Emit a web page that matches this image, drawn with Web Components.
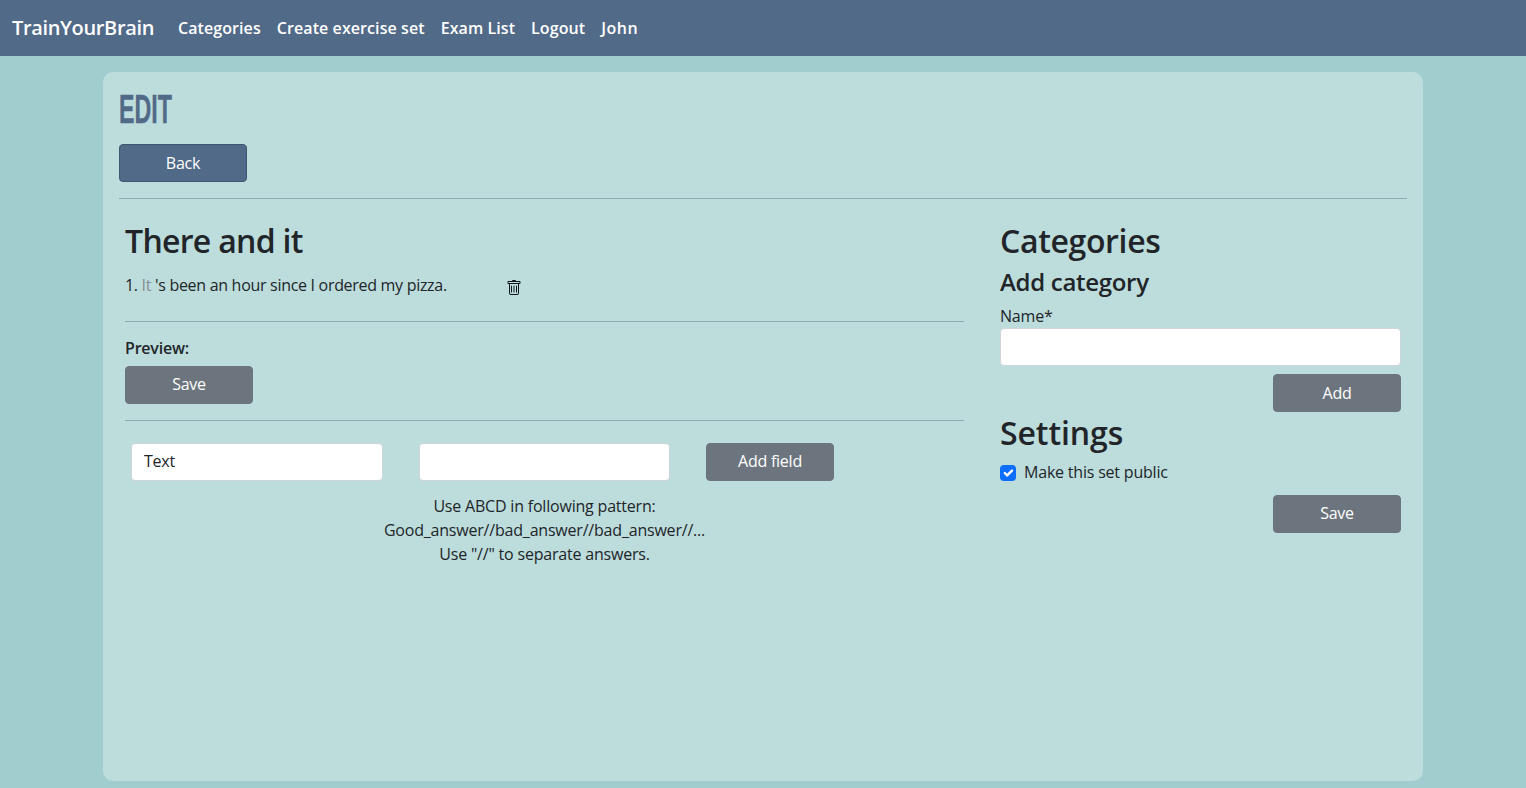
<!DOCTYPE html>
<html lang="en">
<head>
<meta charset="utf-8">
<title>TrainYourBrain</title>
<style>
  html, body { margin: 0; height: 100%; }
  body {
    background: #a2cdcf;
    color: #212529;
    font: 16px/1.5 "Open Sans", "Noto Sans", sans-serif;
  }
</style>
</head>
<body>
<app-navbar brand="TrainYourBrain">
  <a>Categories</a><a>Create exercise set</a><a>Exam List</a><a>Logout</a><a>John</a>
</app-navbar>
<edit-page></edit-page>

<script>
// Small helper, every element just sets its shadow html once
class Base extends HTMLElement {
  connectedCallback() {
    if (!this.shadowRoot) {
      this.attachShadow({ mode: 'open' });
      this.shadowRoot.innerHTML = this.render();
    }
  }
}

class AppNavbar extends Base {
  render() {
    return `
      <style>
        :host {
          display: flex;
          align-items: center;
          height: 56px;
          padding: 0 12px;
          background: #516a88;
          color: #fff;
          font-weight: 600;
        }
        .brand { font-size: 20px; margin-right: 16px; letter-spacing: -.35px; }
        ::slotted(a) { padding: 0 8px; font-size: 16px; letter-spacing: .08px; }
        ::slotted(a:last-child) { letter-spacing: .5px; }
      </style>
      <span class="brand">${this.getAttribute('brand')}</span>
      <slot></slot>
    `;
  }
}

class AppButton extends Base {
  render() {
    const primary = this.hasAttribute('primary');
    const lineHeight = this.hasAttribute('low') ? 36 : 35;
    return `
      <style>
        :host {
          display: block;
          box-sizing: border-box;
          width: 128px;
          height: 38px;
          border: 1px solid ${primary ? '#3f5570' : '#6c757d'};
          border-radius: 4px;
          background: ${primary ? '#516a88' : '#6c757d'};
          color: #fff;
          text-align: center;
          line-height: ${lineHeight}px;
          letter-spacing: -.25px;
        }
      </style>
      <slot></slot>
    `;
  }
}

class TextField extends Base {
  render() {
    return `
      <style>
        :host { display: block; }
        input {
          display: block;
          box-sizing: border-box;
          width: 100%;
          height: 38px;
          padding: 5px 12px 7px;
          border: 1px solid #ced4da;
          border-radius: 4px;
          background: #fff;
          color: #212529;
          font: inherit;
          letter-spacing: -.25px;
          outline: none;
        }
      </style>
      <input type="text" value="${this.getAttribute('value') || ''}">
    `;
  }
}

class TrashIcon extends Base {
  render() {
    return `
      <style>:host { display: inline-flex; } svg { display: block; }</style>
      <svg width="16" height="16" viewBox="0 0 16 16" fill="currentColor">
        <path d="M5.5 5.5A.5.5 0 0 1 6 6v6a.5.5 0 0 1-1 0V6a.5.5 0 0 1 .5-.5zm2.5 0a.5.5 0 0 1 .5.5v6a.5.5 0 0 1-1 0V6a.5.5 0 0 1 .5-.5zm3 .5a.5.5 0 0 0-1 0v6a.5.5 0 0 0 1 0V6z"/>
        <path fill-rule="evenodd" d="M14.5 3a1 1 0 0 1-1 1H13v9a2 2 0 0 1-2 2H5a2 2 0 0 1-2-2V4h-.5a1 1 0 0 1-1-1V2a1 1 0 0 1 1-1H6a1 1 0 0 1 1-1h2a1 1 0 0 1 1 1h3.5a1 1 0 0 1 1 1v1zM4.118 4 4 4.059V13a1 1 0 0 0 1 1h6a1 1 0 0 0 1-1V4.059L11.882 4H4.118zM2.5 3V2h11v1h-11z"/>
      </svg>
    `;
  }
}

class ExerciseEditor extends Base {
  render() {
    return `
      <style>
        :host { display: block; width: 839px; margin-left: 6px; }
        h2 { margin: 0 0 8px; height: 48px; font-size: 32px; line-height: 48px; font-weight: 600; letter-spacing: -.7px; padding-top: 18px; }
        .item { display: flex; height: 36px; letter-spacing: -.3px; }
        .item .text { width: 381px; }
        .item trash-icon { margin-top: 7px; color: #10161c; }
        .muted { color: #868e96; }
        hr { margin: 0; border: 0; border-top: 1px solid #8eacae; }
        .preview { margin-top: 14px; font-weight: 600; letter-spacing: -.2px; height: 30px; }
        .save { margin-bottom: 16px; }
        .fields { display: flex; align-items: center; margin-top: 22px; }
        .fields text-field:nth-child(1) { width: 252px; margin-left: 6px; }
        .fields text-field:nth-child(2) { width: 251px; margin-left: 36px; }
        .fields app-button { margin-left: 36px; }
        .hint { margin-top: 13px; width: 839px; text-align: center; letter-spacing: -.2px; }
      </style>
      <h2>There and it</h2>
      <div class="item">
        <span class="text">1. <span class="muted">It</span> 's been an hour since I ordered my pizza.</span>
        <trash-icon></trash-icon>
      </div>
      <hr style="margin-top:12px">
      <div class="preview">Preview:</div>
      <app-button class="save">Save</app-button>
      <hr>
      <div class="fields">
        <text-field value="Text"></text-field>
        <text-field></text-field>
        <app-button>Add field</app-button>
      </div>
      <div class="hint">Use ABCD in following pattern:<br>Good_answer//bad_answer//bad_answer//...<br>Use "//" to separate answers.</div>
    `;
  }
}

class SidePanel extends Base {
  render() {
    return `
      <style>
        :host { display: block; width: 401px; margin-left: 36px; }
        h2 { margin: 0; font-size: 32px; line-height: 40px; font-weight: 600; letter-spacing: -.35px; }
        h3 { margin: 3px 0 0; font-size: 24px; line-height: 36px; font-weight: 600; letter-spacing: -.3px; }
        .top { padding-top: 22px; }
        label { display: block; margin-top: 4px; height: 24px; letter-spacing: -.2px; }
        .right { display: flex; justify-content: flex-end; }
        .add { margin-top: 8px; }
        .settings { margin-top: 1px; letter-spacing: -.1px; }
        .check { display: flex; align-items: center; gap: 8px; margin-top: 7px; height: 24px; letter-spacing: -.2px; }
        .box {
          display: grid;
          place-items: center;
          width: 16px;
          height: 16px;
          margin-top: 2px;
          border-radius: 4px;
          background: #0d6efd;
        }
        .save { margin-top: 11px; }
      </style>
      <div class="top">
        <h2>Categories</h2>
        <h3>Add category</h3>
        <label>Name*</label>
        <text-field></text-field>
        <div class="right add"><app-button low>Add</app-button></div>
        <h2 class="settings">Settings</h2>
        <div class="check">
          <span class="box">
            <svg width="16" height="16" viewBox="0 0 20 20"><path fill="none" stroke="#fff" stroke-linecap="round" stroke-linejoin="round" stroke-width="3" d="m6 10 3 3 6-6"/></svg>
          </span>
          Make this set public
        </div>
        <div class="right save"><app-button>Save</app-button></div>
      </div>
    `;
  }
}

class EditPage extends Base {
  render() {
    return `
      <style>
        :host { display: block; padding: 16px 103px 0; }
        .card {
          box-sizing: border-box;
          height: 709px;
          padding: 16px;
          border-radius: 10px;
          background: #bddddc;
        }
        h1 {
          margin: 0 0 10px;
          height: 46px;
          color: #516a88;
          font: 700 40px/42px "Liberation Sans Narrow", "Liberation Sans", sans-serif;
          -webkit-text-stroke: .4px #516a88;
          transform: scaleX(.58);
          transform-origin: left center;
        }
        hr { margin: 16px 0 0; border: 0; border-top: 1px solid #8eacae; }
        .row { display: flex; }
      </style>
      <div class="card">
        <h1>EDIT</h1>
        <app-button primary low>Back</app-button>
        <hr>
        <div class="row">
          <exercise-editor></exercise-editor>
          <side-panel></side-panel>
        </div>
      </div>
    `;
  }
}

customElements.define('app-navbar', AppNavbar);
customElements.define('app-button', AppButton);
customElements.define('text-field', TextField);
customElements.define('trash-icon', TrashIcon);
customElements.define('exercise-editor', ExerciseEditor);
customElements.define('side-panel', SidePanel);
customElements.define('edit-page', EditPage);
</script>
</body>
</html>
